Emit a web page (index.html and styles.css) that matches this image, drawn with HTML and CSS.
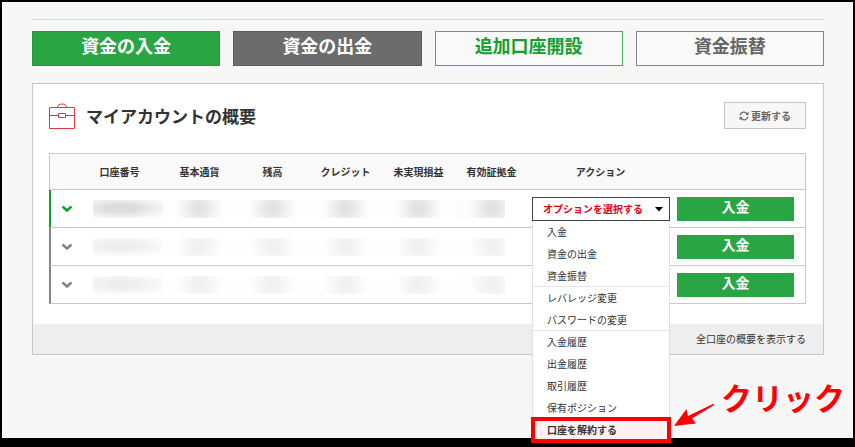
FILE: index.html
```html
<!DOCTYPE html>
<html lang="ja">
<head>
    <meta charset="UTF-8">
    <meta name="viewport" content="width=device-width, initial-scale=1.0">
    <title>マイアカウントの概要</title>
    <link rel="stylesheet" href="styles.css">
</head>
<body>
    <main>
        <nav class="actions">
            <button type="button" class="btn btn-green">資金の入金</button>
            <button type="button" class="btn btn-gray">資金の出金</button>
            <button type="button" class="btn btn-green-line">追加口座開設</button>
            <button type="button" class="btn btn-gray-line">資金振替</button>
        </nav>

        <section class="panel">
            <header class="panel-header">
                <svg class="briefcase" width="26" height="26" viewBox="0 0 26 26" fill="none" stroke="#e0383e" aria-hidden="true">
                    <path d="M.5 4.5h25v21H.5zM8.500 4.500c0-2 1.500-3.500 4.500-3.500s4.500 1.500 4.500 3.500M.5 12.500h9M16.500 12.500h9M9.500 10.500h7v4h-7z"/>
                </svg>
                <h1>マイアカウントの概要</h1>
                <button type="button" class="refresh">
                    <svg width="10" height="10" viewBox="0 0 10 10" fill="none" stroke="#666" stroke-width="1.300" aria-hidden="true">
                        <path d="M1 4.300A4 4 0 0 1 8.200 2.800M9 5.700A4 4 0 0 1 1.800 7.200"/>
                        <path d="M9.600.8v3.200H6.400zM.4 9.200V6h3.200z" fill="#666" stroke="none"/>
                    </svg>
                    更新する
                </button>
            </header>

            <table>
                <colgroup>
                    <col class="col-toggle">
                    <col class="col-account">
                    <col span="5" class="col-value">
                    <col class="col-action">
                    <col class="col-deposit">
                </colgroup>
                <thead>
                    <tr>
                        <th></th>
                        <th class="account">口座番号</th>
                        <th>基本通貨</th>
                        <th>残高</th>
                        <th>クレジット</th>
                        <th>未実現損益</th>
                        <th>有効証拠金</th>
                        <th>アクション</th>
                        <th></th>
                    </tr>
                </thead>
                <tbody>
                    <tr class="active">
                        <td class="toggle">
                            <svg width="12" height="8" viewBox="0 0 12 8" fill="none" stroke="currentColor" stroke-width="2.500" aria-hidden="true"><path d="M1.500 1.500 6 5.500l4.500-4"/></svg>
                        </td>
                        <td><span class="masked masked-wide"></span></td>
                        <td><span class="masked"></span></td>
                        <td><span class="masked"></span></td>
                        <td><span class="masked"></span></td>
                        <td><span class="masked"></span></td>
                        <td><span class="masked masked-end"></span></td>
                        <td class="action">
                            <div class="dropdown">
                                <select aria-label="アクション">
                                    <option>オプションを選択する</option>
                                </select>
                                <svg class="caret" width="8" height="5" viewBox="0 0 8 5" aria-hidden="true"><path d="M0 0h8L4 4.500z"/></svg>
                                <ul class="menu">
                                    <li><a href="#">入金</a></li>
                                    <li><a href="#">資金の出金</a></li>
                                    <li><a href="#">資金振替</a></li>
                                    <li class="divided"><a href="#">レバレッジ変更</a></li>
                                    <li><a href="#">パスワードの変更</a></li>
                                    <li class="divided"><a href="#">入金履歴</a></li>
                                    <li><a href="#">出金履歴</a></li>
                                    <li><a href="#">取引履歴</a></li>
                                    <li><a href="#">保有ポジション</a></li>
                                    <li class="marked"><a href="#">口座を解約する</a></li>
                                </ul>
                                <div class="callout">
                                    <svg width="41" height="24" viewBox="0 0 41 24" fill="#f00" aria-hidden="true">
                                        <path d="M0 23 12.500 6l1.500 7L39.500.800l.500 1.400L18 15.500l4 5z"/>
                                    </svg>
                                    <span>クリック</span>
                                </div>
                            </div>
                        </td>
                        <td class="deposit"><button type="button" class="btn-deposit">入金</button></td>
                    </tr>
                    <tr class="light">
                        <td class="toggle">
                            <svg width="12" height="8" viewBox="0 0 12 8" fill="none" stroke="currentColor" stroke-width="2.500" aria-hidden="true"><path d="M1.500 1.500 6 5.500l4.500-4"/></svg>
                        </td>
                        <td><span class="masked masked-wide"></span></td>
                        <td><span class="masked"></span></td>
                        <td><span class="masked"></span></td>
                        <td><span class="masked"></span></td>
                        <td><span class="masked"></span></td>
                        <td><span class="masked masked-end"></span></td>
                        <td></td>
                        <td class="deposit"><button type="button" class="btn-deposit">入金</button></td>
                    </tr>
                    <tr class="light">
                        <td class="toggle">
                            <svg width="12" height="8" viewBox="0 0 12 8" fill="none" stroke="currentColor" stroke-width="2.500" aria-hidden="true"><path d="M1.500 1.500 6 5.500l4.500-4"/></svg>
                        </td>
                        <td><span class="masked masked-wide"></span></td>
                        <td><span class="masked"></span></td>
                        <td><span class="masked"></span></td>
                        <td><span class="masked"></span></td>
                        <td><span class="masked"></span></td>
                        <td><span class="masked masked-end"></span></td>
                        <td></td>
                        <td class="deposit"><button type="button" class="btn-deposit">入金</button></td>
                    </tr>
                </tbody>
            </table>

            <footer class="panel-footer">
                <a href="#">全口座の概要を表示する</a>
            </footer>
        </section>
    </main>
</body>
</html>
```
FILE: styles.css
```css
* {
    box-sizing: border-box;
}

body {
    display: flex;
    min-height: 100vh;
    margin: 0;
    padding: 2px 2px 9px;
    background: #000;
    color: #333;
    font-family: "Noto Sans CJK JP", sans-serif;
    font-size: 10px;
    line-height: 14px;
}

button,
select {
    margin: 0;
    border-radius: 0;
    font-family: inherit;
    cursor: pointer;
}

a {
    color: inherit;
    text-decoration: none;
}

main {
    flex: 1;
    padding: 17px 29px 0 30px;
    background: #f7f7f7;
}

/* top buttons */
.actions {
    display: grid;
    grid-template-columns: repeat(4, 1fr);
    gap: 13px;
    padding-top: 11px;
    border-top: 1px solid #d8d8d8;
}

.btn {
    height: 35px;
    padding: 0 0 6px;
    border: 1px solid;
    font-size: 18px;
    font-weight: bold;
    line-height: 27px;
}

.btn-green {
    background: #29a643;
    border-color: #1f9d3a;
    color: white;
}

.btn-gray {
    background: #6c6c6c;
    border-color: #5c5c5c;
    color: white;
}

.btn-green-line {
    background: #f9f9f9;
    border-color: #3fb558;
    color: #12a02c;
}

.btn-gray-line {
    background: #f9f9f9;
    border-color: #858585;
    color: #666;
}

/* account panel */
.panel {
    margin-top: 17px;
    background: white;
    border: 1px solid #c8c8c8;
}

.panel-header {
    display: flex;
    align-items: center;
    padding: 18px 17px 24px 16px;
}

h1 {
    flex: 1;
    margin: 0 0 0 11px;
    font-size: 17px;
    line-height: 26px;
}

.refresh {
    display: flex;
    align-items: center;
    justify-content: center;
    gap: 2px;
    width: 82px;
    height: 27px;
    padding: 0;
    background: #f7f7f7;
    border: 1px solid #c4c4c4;
    color: #666;
    font-size: 10px;
    font-weight: bold;
}

table {
    width: calc(100% - 33px);
    margin: 0 17px 20px 16px;
    table-layout: fixed;
    border-collapse: separate;
    border-spacing: 0;
    border: 1px solid #c8c8c8;
    border-width: 1px 1px 0 0;
}

.col-toggle {
    width: 44px;
}

.col-account {
    width: 70px;
}

.col-value {
    width: 73px;
}

.col-action {
    width: 145px;
}

.col-deposit {
    width: 132px;
}

th,
td {
    padding: 0;
    border-bottom: 1px solid #c8c8c8;
}

th {
    height: 36px;
    background: #f9f9f9;
    font-weight: bold;
}

th:first-child {
    border-left: 1px solid #c8c8c8;
}

th.account {
    padding-right: 17px;
}

td {
    height: 38px;
}

.toggle {
    padding-right: 10px;
    border-left: 2px solid #858585;
    color: #858585;
    text-align: center;
}

.active .toggle {
    border-left-color: #12a02c;
    color: #12a02c;
}

.toggle svg {
    display: block;
    margin: 0 auto;
}

/* hidden account values */
.masked {
    display: block;
    height: 18px;
    background: radial-gradient(circle at 50% 45%, #e2e2e2 10%, #fdfdfd 60%);
}

.masked-wide {
    background: radial-gradient(ellipse at 40% 45%, #dcdcdc 25%, #fcfcfc 85%);
}

.masked-end {
    margin-right: 23px;
    background: radial-gradient(circle at 75% 45%, #e2e2e2 10%, #fcfcfc 60%);
}

.light .masked {
    opacity: 0.5;
}

.action {
    padding: 0 3px 0 4px;
}

.dropdown {
    position: relative;
}

select {
    display: block;
    width: 100%;
    height: 24px;
    padding: 0 10px;
    appearance: none;
    background: white;
    border: 1px solid #444;
    color: #e00012;
    font-size: 10px;
    font-weight: bold;
}

.caret {
    position: absolute;
    top: 10px;
    right: 7px;
    pointer-events: none;
}

.menu {
    position: absolute;
    top: 24px;
    left: 0;
    z-index: 1;
    width: 100%;
    margin: 0;
    padding: 0;
    background: white;
    border: 1px solid #e2e2e2;
    border-top: 0;
    list-style: none;
}

.menu a {
    display: block;
    padding: 4px 14px;
}

.menu li {
    height: 22px;
}

.menu .divided {
    box-shadow: 0 -1px #e6e6e6;
}

.menu .marked {
    background: #fff1f1;
    outline: 4px solid #f00;
    outline-offset: -2px;
    font-weight: bold;
}

.callout {
    position: absolute;
    top: 182px;
    left: 142px;
    z-index: 2;
    display: flex;
    align-items: flex-end;
    gap: 6px;
    color: #f00;
    font-size: 31px;
    font-weight: bold;
    line-height: 36px;
    white-space: nowrap;
}

.callout span {
    padding-bottom: 12px;
}

.deposit {
    padding: 0 11px 0 4px;
}

.btn-deposit {
    display: block;
    width: 100%;
    height: 24px;
    padding: 0 0 6px;
    background: #29a643;
    border: 0;
    color: white;
    font-size: 14px;
    font-weight: bold;
    line-height: 18px;
}

.panel-footer {
    padding: 8px 17px;
    background: #eee;
    text-align: right;
}
```
